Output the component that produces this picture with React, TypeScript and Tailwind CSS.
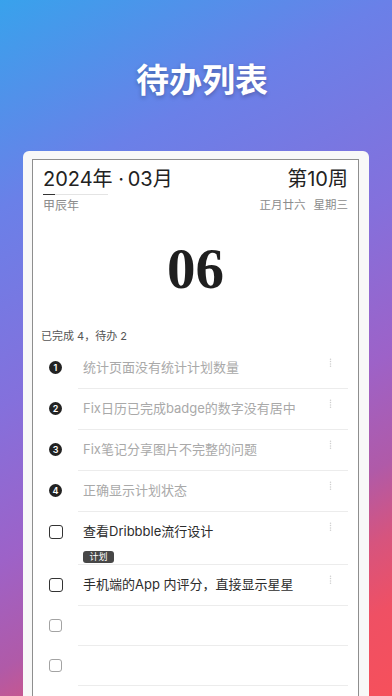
import React from 'react';

type Task = {
    text: string;
    done: boolean;
    tag?: string;
};

const tasks: Task[] = [
    { text: '统计页面没有统计计划数量', done: true },
    { text: 'Fix日历已完成badge的数字没有居中', done: true },
    { text: 'Fix笔记分享图片不完整的问题', done: true },
    { text: '正确显示计划状态', done: true },
    { text: '查看Dribbble流行设计', done: false, tag: '计划' },
    { text: '手机端的App 内评分，直接显示星星', done: false },
];

const font = { fontFamily: 'Inter, "Noto Sans CJK SC", sans-serif' };

function Kebab() {
    return (
        <svg width="3" height="9" viewBox="0 0 3 9" className="shrink-0">
            <circle cx="1.5" cy="1.2" r="0.75" fill="#cfcfcf" />
            <circle cx="1.5" cy="3.6" r="0.75" fill="#cfcfcf" />
            <circle cx="1.5" cy="6" r="0.75" fill="#cfcfcf" />
            <circle cx="1.5" cy="8.2" r="0.75" fill="#cfcfcf" />
        </svg>
    );
}

function TaskRow({ task, index }: { task: Task; index: number }) {
    return (
        <div className="flex">
            {/* Marker column */}
            <div className="w-[45px] h-[40px] shrink-0 flex items-center justify-center">
                {task.done ? (
                    <div className="w-[13px] h-[13px] rounded-full bg-[#222] text-white text-[9px] font-semibold flex items-center justify-center leading-none">
                        {index + 1}
                    </div>
                ) : (
                    <div className="w-[14px] h-[14px] rounded-[3px] border-[1.5px] border-[#333]" />
                )}
            </div>

            {/* Content */}
            <div className="flex-1 border-b border-[#ececec] mr-[10px] flex">
                <div className="flex-1 pl-[5px] flex flex-col">
                    <div className="h-[40px] flex items-center">
                        <span className={`text-[13px] ${task.done ? 'text-[#a9a9a9]' : 'text-[#2c2c2c]'}`}>
                            {task.text}
                        </span>
                    </div>
                    {task.tag && (
                        <div className="flex -mt-[1px] pb-[1px]">
                            <span className="flex items-center justify-center w-[31px] h-[12px] rounded-[3px] bg-[#474747] text-white text-[9px] leading-none">
                                {task.tag}
                            </span>
                        </div>
                    )}
                </div>
                <div className="w-[19px] pt-[10px]">
                    <Kebab />
                </div>
            </div>
        </div>
    );
}

function EmptyRow() {
    return (
        <div className="flex">
            <div className="w-[45px] h-[40px] shrink-0 flex items-center justify-center">
                <div className="w-[13px] h-[13px] rounded-[3px] border border-[#a3a3a3]" />
            </div>
            <div className="flex-1 border-b border-[#ececec] mr-[10px]" />
        </div>
    );
}

export default function App() {
    return (
        <div
            className="w-full h-[696px] overflow-hidden flex flex-col bg-[linear-gradient(152deg,#38a2ec_0%,#6a80e8_23%,#8470dc_45%,#9d62c8_62%,#b05aa8_74%,#d6547e_82%,#ef5064_90%,#f6505b_100%)]"
            style={font}
        >
            {/* Title */}
            <div className="h-[151px] shrink-0 flex items-center justify-center pt-[10px] pl-[12px]">
                <h1 className="text-white text-[33px] font-semibold [text-shadow:0_2px_4px_rgba(0,0,0,0.25)]">
                    待办列表
                </h1>
            </div>

            {/* Calendar card */}
            <div className="mx-[23px] flex-1 rounded-t-[6px] bg-[#f8f8f8] pl-[9px] pr-[10px] pt-[8px]">
                <div className="h-full border-[1.5px] border-b-0 border-[#8e8e8e] bg-white">
                    {/* Header */}
                    <div className="px-[10px] pt-[6px]">
                        <div className="flex justify-between items-end">
                            <div>
                                <div className="text-[20px] leading-[26px] text-[#222]">2024年 ·{'\u2009'}03月</div>
                                <div className="relative mt-[2px] w-[65px] h-[1px] bg-[#e4e4e4]">
                                    <div className="absolute left-0 -top-[0.5px] w-[12px] h-[1.5px] bg-[#333]" />
                                </div>
                            </div>
                            <div className="text-[20px] leading-[26px] text-[#222] mb-[3px]">第10周</div>
                        </div>
                        <div className="flex justify-between items-center mt-[2px]">
                            <span className="text-[12px] text-[#8c8c8c]">甲辰年</span>
                            <span className="text-[11.5px] text-[#8c8c8c] flex gap-[8px]">
                                <span>正月廿六</span>
                                <span>星期三</span>
                            </span>
                        </div>
                    </div>

                    {/* Day */}
                    <div className="flex justify-center mt-[20px]">
                        <span
                            className="text-[57px] font-bold leading-[68px] text-[#1f1f1f]"
                            style={{ fontFamily: '"Liberation Serif", "DejaVu Serif", serif' }}
                        >
                            06
                        </span>
                    </div>

                    {/* Summary */}
                    <div className="px-[8px] mt-[25px] text-[11px] text-[#555]">已完成 4，待办 2</div>

                    {/* Tasks */}
                    <div className="mt-[3px]">
                        {tasks.map((t, i) => (
                            <TaskRow key={i} task={t} index={i} />
                        ))}
                        <EmptyRow />
                        <EmptyRow />
                    </div>
                </div>
            </div>
        </div>
    );
}
